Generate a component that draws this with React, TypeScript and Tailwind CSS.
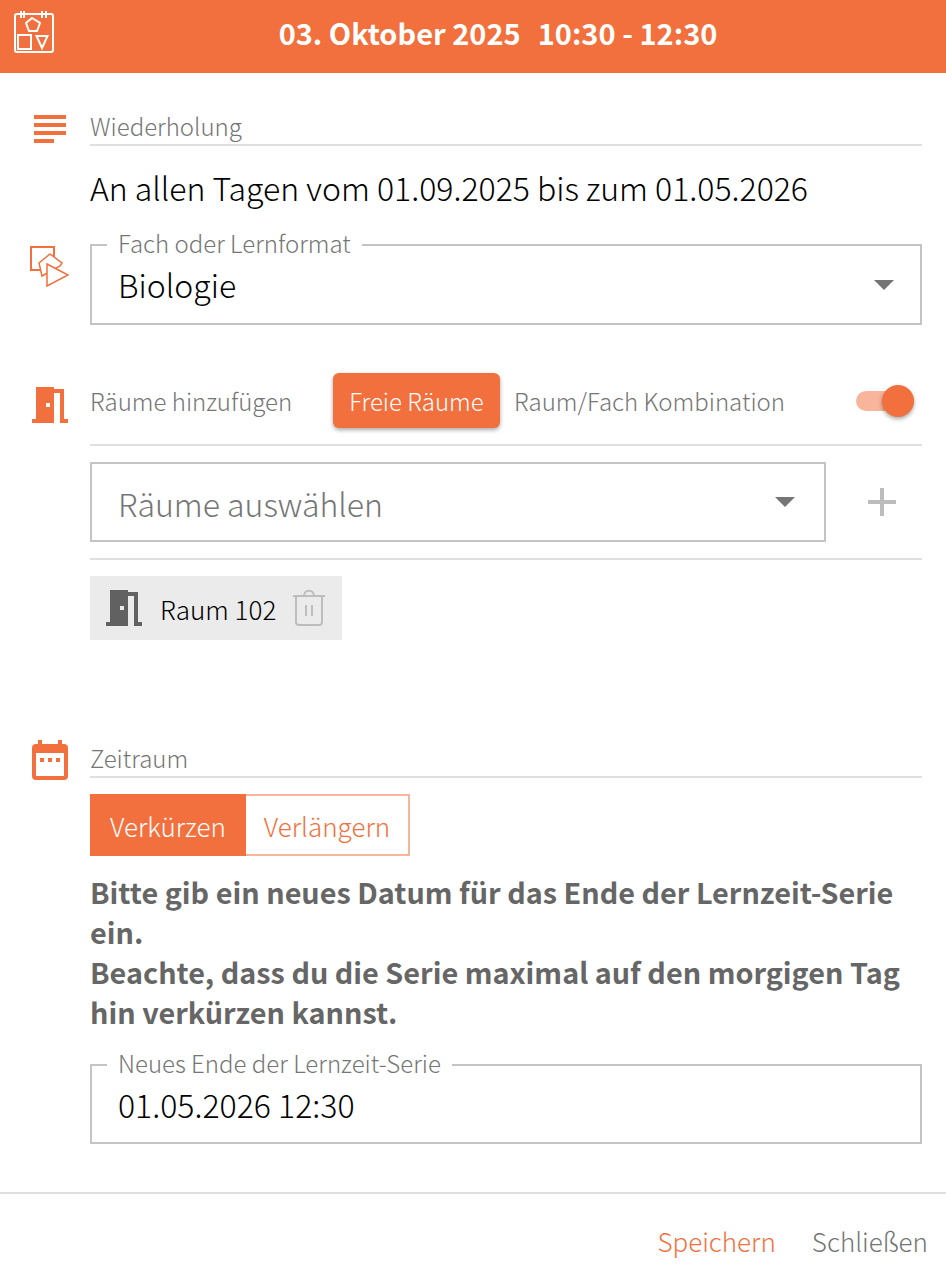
import React from 'react';

const font = "font-['Noto_Sans_CJK_JP','Noto_Sans',sans-serif]";

const HeaderIcon = () => (
  <svg width="42" height="42" viewBox="0 0 42 42" fill="none" stroke="#fff" strokeWidth="2">
    <rect x="2" y="3" width="38" height="38" rx="2" />
    <path d="M8 0v7M11 0v7M29 0v7M33 0v7" />
    <path d="M19 7l8 5-3 8h-8l-3-8z" />
    <rect x="5" y="24" width="13" height="14" />
    <path d="M23.500 25h11l-5.500 12z" />
  </svg>
);

const LinesIcon = () => (
  <svg width="32" height="28" viewBox="0 0 32 28" fill="#f2703d">
    <rect x="0" y="0" width="32" height="4" />
    <rect x="0" y="8" width="32" height="4" />
    <rect x="0" y="16" width="32" height="4" />
    <rect x="0" y="24" width="20" height="4" />
  </svg>
);

const ShapesIcon = () => (
  <svg width="40" height="42" viewBox="0 0 40 42" fill="none" stroke="#f2703d">
    <rect x="1" y="1" width="23" height="23" strokeWidth="2" />
    <path d="M20 8l12 9-2 3-18 10-3-13z" fill="#fff" strokeWidth="1.500" />
    <path d="M17 18l21 11-21 11z" fill="#fff" strokeWidth="1.500" />
  </svg>
);

const DoorIcon = ({ color, bg }: { color: string; bg: string }) => (
  <svg width="36" height="36" viewBox="0 0 36 36">
    <path d="M4 0h18v2h10v30h4v4H28V6h-6v30H0v-4h4z" fill={color} />
    <rect x="14" y="16" width="4" height="4" fill={bg} />
  </svg>
);

const CalendarIcon = () => (
  <svg width="36" height="40" viewBox="0 0 36 40">
    <path d="M6 0h4v4h16V0h4v4h2a4 4 0 0 1 4 4v28a4 4 0 0 1-4 4H4a4 4 0 0 1-4-4V8a4 4 0 0 1 4-4h2z" fill="#f2703d" />
    <rect x="4" y="13" width="28" height="23" fill="#fff" />
    <rect x="8" y="18" width="4" height="4" fill="#f2703d" />
    <rect x="16" y="18" width="4" height="4" fill="#f2703d" />
    <rect x="24" y="18" width="4" height="4" fill="#f2703d" />
  </svg>
);

const TrashIcon = () => (
  <svg width="34" height="38" viewBox="0 0 34 38" fill="none" stroke="#bdbdbd" strokeWidth="2">
    <path d="M1 7h32" />
    <path d="M12 7c0-7 10-7 10 0" />
    <path d="M4 7v26a3 3 0 0 0 3 3h20a3 3 0 0 0 3-3V7" />
    <path d="M14 16v11M20 16v11" />
  </svg>
);

const Caret = () => (
  <div className="w-0 h-0 border-l-[10px] border-r-[10px] border-t-[10px] border-l-transparent border-r-transparent border-t-[#757575]" />
);

function SectionLabel({ children }: { children: React.ReactNode }) {
  return <div className="border-b-2 border-[#e0e0e0] text-[24px] leading-[36px] font-light text-[#757575]">{children}</div>;
}

function Field({ label, className, children }: { label: string; className: string; children: React.ReactNode }) {
  return (
    <div className={`relative border-2 border-[#c4c4c4] flex items-center justify-between pl-[26px] pr-[26px] ${className}`}>
      <span className="absolute left-[15px] top-[-17px] bg-white px-[11px] text-[24px] leading-[28px] font-light text-[#757575]">{label}</span>
      {children}
    </div>
  );
}

export default function App() {
  return (
    <div className={`${font} w-[946px] h-[1280px] bg-white flex flex-col overflow-hidden`}>
      <header className="h-[73px] shrink-0 bg-[#f2703d] flex items-center justify-center gap-[17px] relative pl-[50px] pb-[8px]">
        <div className="absolute left-[13px] top-[11px]"><HeaderIcon /></div>
        <h1 className="text-[29px] font-bold text-white">03. Oktober 2025</h1>
        <span className="text-[29px] font-bold text-white">10:30 - 12:30</span>
      </header>

      <main className="flex-1 pl-[24px] pr-[24px]">
        {/* Wiederholung */}
        <div className="flex mt-[35px]">
          <div className="w-[66px] shrink-0 pl-[10px] pt-[7px]"><LinesIcon /></div>
          <div className="flex-1">
            <SectionLabel>Wiederholung</SectionLabel>
            <p className="mt-[19px] text-[32px] leading-[44px] font-light text-black">An allen Tagen vom 01.09.2025 bis zum 01.05.2026</p>
          </div>
        </div>

        {/* Fach */}
        <div className="flex mt-[35px]">
          <div className="w-[66px] shrink-0 pl-[6px] pt-[2px]"><ShapesIcon /></div>
          <div className="flex-1">
            <Field label="Fach oder Lernformat" className="h-[81px]">
              <span className="text-[32px] font-light text-black pb-[2px]">Biologie</span>
              <Caret />
            </Field>
          </div>
        </div>

        {/* Raeume */}
        <div className="flex mt-[49px]">
          <div className="w-[66px] shrink-0 pl-[8px] pt-[13px]"><DoorIcon color="#f2703d" bg="#fff" /></div>
          <div className="flex-1">
            <div className="flex items-center h-[72px] border-b-2 border-[#e0e0e0] pb-[17px]">
              <span className="w-[243px] text-[24px] font-light text-[#757575]">Räume hinzufügen</span>
              <button className="w-[167px] h-[55px] rounded-[6px] bg-[#f2703d] text-[24px] font-light text-white shadow-[0_2px_4px_rgba(0,0,0,0.35)]">Freie Räume</button>
              <span className="ml-[14px] text-[24px] font-light text-[#757575]">Raum/Fach Kombination</span>
              <div className="relative ml-auto mr-[8px] w-[58px] h-[20px] rounded-full bg-[#f8b59b]">
                <div className="absolute right-0 top-[-6px] w-[32px] h-[32px] rounded-full bg-[#f2703d] shadow-[0_2px_4px_rgba(0,0,0,0.35)]" />
              </div>
            </div>
            <div className="flex items-center mt-[16px]">
              <div className="w-[736px] h-[80px] border-2 border-[#c4c4c4] flex items-center justify-between pl-[26px] pr-[29px]">
                <span className="text-[32px] font-light text-[#757575] pt-[2px]">Räume auswählen</span>
                <Caret />
              </div>
              <svg className="ml-[41px]" width="30" height="30" viewBox="0 0 30 30" fill="#bdbdbd">
                <rect x="13" y="1" width="4" height="28" />
                <rect x="1" y="13" width="28" height="4" />
              </svg>
            </div>
            <div className="mt-[16px] border-b-2 border-[#e0e0e0]" />
            <div className="mt-[16px] w-[252px] h-[64px] bg-[#ebebeb] flex items-center pl-[16px]">
              <DoorIcon color="#616161" bg="#ebebeb" />
              <span className="ml-[18px] text-[26px] font-light text-black">Raum 102</span>
              <span className="ml-[16px]"><TrashIcon /></span>
            </div>
          </div>
        </div>

        {/* Zeitraum */}
        <div className="flex mt-[100px]">
          <div className="w-[66px] shrink-0 pl-[8px]"><CalendarIcon /></div>
          <div className="flex-1">
            <SectionLabel>Zeitraum</SectionLabel>
            <div className="flex mt-[16px]">
              <button className="w-[156px] h-[62px] bg-[#f2703d] text-[26px] font-light text-white">Verkürzen</button>
              <button className="w-[164px] h-[62px] border-2 border-l-0 border-[#f8b59b] text-[26px] font-light text-[#f2703d]">Verlängern</button>
            </div>
            <p className="mt-[16px] text-[28.8px] leading-[40px] font-bold text-[#666666]">
              Bitte gib ein neues Datum für das Ende der Lernzeit-Serie ein.
              <br />
              Beachte, dass du die Serie maximal auf den morgigen Tag hin verkürzen kannst.
            </p>
            <div className="mt-[32px]">
              <Field label="Neues Ende der Lernzeit-Serie" className="h-[80px]">
                <span className="text-[32px] font-light text-black">01.05.2026 12:30</span>
              </Field>
            </div>
          </div>
        </div>
      </main>

      <footer className="h-[88px] shrink-0 border-t-2 border-[#e0e0e0] flex items-center justify-end pr-[18px] pt-[7px] gap-[36px] text-[26px] font-light">
        <span className="text-[#f2703d]">Speichern</span>
        <span className="text-[#757575]">Schließen</span>
      </footer>
    </div>
  );
}
